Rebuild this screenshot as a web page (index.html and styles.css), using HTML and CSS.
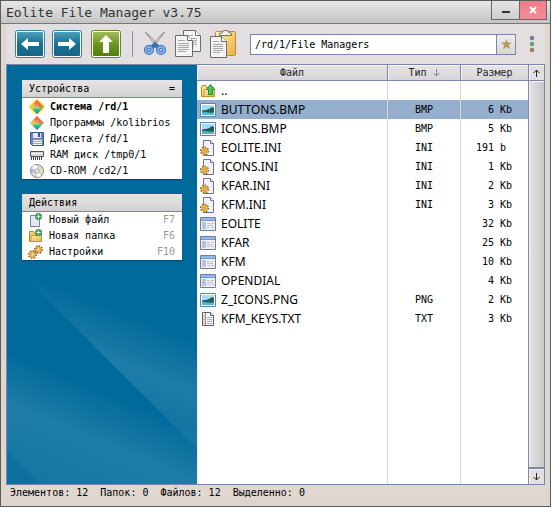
FILE: index.html
```html
<!DOCTYPE html>
<html lang="ru">
<head>
<meta charset="utf-8">
<title>Eolite File Manager v3.75</title>
<link rel="stylesheet" href="styles.css">
</head>
<body>
<svg class="defs" aria-hidden="true">
  <defs>
    <linearGradient id="blue" x1="0" y1="0" x2="0" y2="1"><stop offset="0" stop-color="#4a9fb8"/><stop offset=".5" stop-color="#1c6f92"/><stop offset="1" stop-color="#156588"/></linearGradient>
    <linearGradient id="green" x1="0" y1="0" x2="0" y2="1"><stop offset="0" stop-color="#a0bc58"/><stop offset=".5" stop-color="#6d9622"/><stop offset="1" stop-color="#4f7f08"/></linearGradient>
    <linearGradient id="gold" x1="0" y1="0" x2="1" y2="1"><stop offset="0" stop-color="#fff0b0"/><stop offset="1" stop-color="#e8b040"/></linearGradient>
    <linearGradient id="rainbow" x1="0" y1="0" x2="0" y2="1"><stop offset="0" stop-color="#ee4a30"/><stop offset=".35" stop-color="#f58a58"/><stop offset=".55" stop-color="#9fd480"/><stop offset=".75" stop-color="#27b58c"/><stop offset="1" stop-color="#2c6ee0"/></linearGradient>
    <linearGradient id="ray" gradientUnits="userSpaceOnUse" x1="100" y1="240" x2="62" y2="335"><stop offset="0" stop-color="#fff" stop-opacity="0"/><stop offset=".5" stop-color="#fff" stop-opacity=".12"/><stop offset="1" stop-color="#fff" stop-opacity=".05"/></linearGradient>
    <linearGradient id="ray2" gradientUnits="userSpaceOnUse" x1="0" y1="285" x2="-44" y2="390"><stop offset="0" stop-color="#fff" stop-opacity="0"/><stop offset=".45" stop-color="#fff" stop-opacity=".12"/><stop offset="1" stop-color="#fff" stop-opacity=".08"/></linearGradient>
  </defs>
  <symbol id="i-gem" viewBox="0 0 16 16"><path d="M8 1l7 7-7 7-7-7z" fill="url(#rainbow)"/><path d="M11 4l4 4-3 2-3-3z" fill="#ee5038" opacity=".45"/><path d="M1 8l4-4 2 4-3 3z" fill="#f6d24a" opacity=".55"/></symbol>
  <symbol id="i-floppy" viewBox="0 0 16 16"><path d="M1.500 1.500h13v13h-11l-2-2z" fill="#6a86bd" stroke="#3d5590"/><path d="M4 2h8v5H4z" fill="#e4e9f2"/><path d="M9 2h2v4H9z" fill="#3d5590"/><path d="M4 9h9v5H4z" fill="#fff"/><path d="M4 10.500h9M4 12.500h9" stroke="#ef7d94"/></symbol>
  <symbol id="i-ram" viewBox="0 0 16 16"><path d="M1.500 4.500h13v5h-13z" fill="#d6d6d6" stroke="#555"/><path d="M3 6.500h10" stroke="#fff"/><path d="M2.500 10v3M4.500 10v3M6.500 10v3M8.500 10v3M10.500 10v3M12.500 10v3" stroke="#444"/></symbol>
  <symbol id="i-cd" viewBox="0 0 16 16"><circle cx="8" cy="8" r="6.500" fill="#d7d7dc" stroke="#888"/><path d="M8 8L3 3.500A7 7 0 0 1 8 2z" fill="#fff"/><path d="M8 8l6-2v4z" fill="#f3e28c"/><path d="M8 8l4 5-4 1z" fill="#fff"/><path d="M8 8l-6 2V6z" fill="#bcb4d8"/><circle cx="8" cy="8" r="2" fill="#fff" stroke="#999"/></symbol>
  <symbol id="i-newfile" viewBox="0 0 16 16"><path d="M2.500 3.500h9v11h-9z" fill="#e6e9f4" stroke="#767ea3"/><circle cx="10.500" cy="4.500" r="3.500" fill="#37a04a"/><path d="M8.500 4.500h4M10.500 2.500v4" stroke="#fff"/></symbol>
  <symbol id="i-newfolder" viewBox="0 0 16 16"><path d="M1.500 13.500v-10h4l1 2h7v8z" fill="#f3d070" stroke="#b88618"/><path d="M3.500 7.500h10v6h-11z" fill="url(#gold)" stroke="#c8952a"/><circle cx="10.500" cy="4.500" r="3.500" fill="#37a04a"/><path d="M8.500 4.500h4M10.500 2.500v4" stroke="#fff"/></symbol>
  <symbol id="i-gears" viewBox="0 0 16 16"><g fill="none" stroke="#815515" stroke-width="2" stroke-dasharray="1.500 1.200"><circle cx="4.500" cy="10.500" r="3.500"/><circle cx="10.500" cy="5.500" r="3.500"/></g><g fill="#fff" stroke="#e4ad42" stroke-width="2"><circle cx="4.500" cy="10.500" r="2"/><circle cx="10.500" cy="5.500" r="2"/></g></symbol>
  <symbol id="i-up" viewBox="0 0 16 16"><path d="M1.500 13.500v-10l1-1h3l1 2h7v9z" fill="#f7df88" stroke="#b88618"/><path d="M4.500 6.500h10v7h-11z" fill="url(#gold)" stroke="#c8952a"/><path d="M10.500 1.500l-4 5h2v5h4v-5h2z" fill="#4bc35c" stroke="#219033"/></symbol>
  <symbol id="i-image" viewBox="0 0 16 16"><path d="M.500 1.500h15v13H.500z" fill="#fff" stroke="#6581af"/><path d="M2 3h12v5H2z" fill="#a9dcf2"/><path d="M2 8h12v5H2z" fill="#2b93ae"/><path d="M2 9l4-1 3-1 3-2 2 1v4l-5 1z" fill="#245c5c"/><path d="M2 10l12 1v2H2z" fill="#55b6c8"/></symbol>
  <symbol id="i-ini" viewBox="0 0 16 16"><path d="M3.500.500h7l3 3v12h-10z" fill="#f2f3fa" stroke="#6d7195"/><path d="M10.500.500v3h3" fill="#fff" stroke="#6d7195"/><circle cx="4.500" cy="11" r="3.500" fill="none" stroke="#815515" stroke-width="2" stroke-dasharray="1.500 1.200"/><circle cx="4.500" cy="11" r="2.200" fill="#fff" stroke="#e9ad3c" stroke-width="2.400"/><circle cx="4.500" cy="11" r="1" fill="#fff" stroke="#815515" stroke-width=".5"/></symbol>
  <symbol id="i-app" viewBox="0 0 16 16"><path d="M.500 1.500h15v13H.500z" fill="#f0f1f5" stroke="#707ba4"/><path d="M1 2h14v3H1z" fill="#8ebcf0"/><path d="M1 4.500h14" stroke="#707ba4" opacity=".6"/><path d="M2 6h4v7H2z" fill="#b9c2d8"/><path d="M7 7.500h3M11 7.500h3M7 9.500h6M7 11.500h3M11 11.500h3" stroke="#bfc3d0"/></symbol>
  <symbol id="i-text" viewBox="0 0 16 16"><path d="M2.500 1.500h8l3 3v10h-11z" fill="#f6f6fa" stroke="#5d6080"/><path d="M10.500 1.500v3h3" fill="#fff" stroke="#5d6080"/><path d="M3 4.500h2M3 6.500h2M3 8.500h2M3 10.500h2M3 12.500h2" stroke="#f5a58a"/><path d="M5.500 2v12" stroke="#f2703e"/><path d="M7 6.500h5M7 8.500h5M7 10.500h5M7 12.500h5" stroke="#b0b2c0"/></symbol>
  <symbol id="i-page" viewBox="0 0 18 22"><path d="M.500.500h12l5 5v16H.500z" fill="#f4f4f4" stroke="#6c6c6c"/><path d="M12.500.500v5h5" fill="#fff" stroke="#6c6c6c"/><path d="M3 5.500h7M3 8.500h11M3 10.500h11M3 12.500h11M3 14.500h11M3 16.500h8" stroke="#a8a8a8"/></symbol>
</svg>

<div class="window">
  <header class="titlebar">
    <h1>Eolite File Manager v3.75</h1>
    <div class="controls">
      <button class="min" aria-label="Minimize"><svg width="8" height="8"><path d="M0 6h8" stroke="#333" stroke-width="2"/></svg></button>
      <button class="close" aria-label="Close"><svg width="8" height="8"><path d="M1 1l6 6M7 1L1 7" stroke="#fff" stroke-width="2"/></svg></button>
    </div>
  </header>

  <nav class="toolbar">
    <button aria-label="Back"><svg width="30" height="28"><rect x=".5" y=".5" width="29" height="27" rx="2" fill="#fff" stroke="#3b7f9b"/><rect x="2" y="2" width="26" height="24" rx="1" fill="url(#blue)"/><path d="M6 14l7-6v4h11v4H13v4z" fill="#fff"/></svg></button>
    <button aria-label="Forward"><svg width="30" height="28"><rect x=".5" y=".5" width="29" height="27" rx="2" fill="#fff" stroke="#3b7f9b"/><rect x="2" y="2" width="26" height="24" rx="1" fill="url(#blue)"/><path d="M24 14l-7-6v4H6v4h11v4z" fill="#fff"/></svg></button>
    <button class="up" aria-label="Up"><svg width="30" height="28"><rect x=".5" y=".5" width="29" height="27" rx="2" fill="#fff" stroke="#64852e"/><rect x="2" y="2" width="26" height="24" rx="1" fill="url(#green)"/><path d="M15 5l7 7h-4v11h-6V12H8z" fill="#fff"/></svg></button>
    <span class="sep"></span>
    <button aria-label="Cut"><svg width="22" height="26"><path d="M1.500 1.500l2 1 11 12-2 1zM20.500 1.500l-2 1-11 12 2 1z" fill="#f4f4f4" stroke="#858585"/><g fill="none" stroke="#3a70b8" stroke-width="4"><ellipse cx="5" cy="19" rx="3" ry="3"/><ellipse cx="17" cy="19" rx="3" ry="3"/><path d="M8 16l3-2 3 2"/></g><g fill="none" stroke="#7fb0e6" stroke-width="2"><ellipse cx="5" cy="19" rx="3" ry="3"/><ellipse cx="17" cy="19" rx="3" ry="3"/></g></svg></button>
    <button class="copy" aria-label="Copy"><svg width="26" height="28"><use href="#i-page" x="8" y="0" width="18" height="22"/><use href="#i-page" x="0" y="5" width="18" height="22"/></svg></button>
    <button aria-label="Paste"><svg width="26" height="28"><rect x="5.500" y="1.500" width="20" height="24" rx="1" fill="url(#gold)" stroke="#c08c28"/><path d="M9.500 5.500v-2l3-1 1-2h4l1 2 3 1v2z" fill="#eee" stroke="#777"/><svg x="0" y="6" width="17" height="22" viewBox="0 0 17 22"><path d="M.500.500h11l5 5v16H.500z" fill="#f4f4f4" stroke="#6c6c6c"/><path d="M11.500.500v5h5" fill="#fff" stroke="#6c6c6c"/><path d="M3 5.500h6M3 8.500h10M3 10.500h10M3 12.500h10M3 14.500h10M3 16.500h7" stroke="#a8a8a8"/></svg></svg></button>
    <div class="address">
      <input type="text" value="/rd/1/File Managers" aria-label="Path">
      <button aria-label="Bookmarks"><svg width="11" height="10"><path d="M5.500 0l1.500 3.500h4L8 6l1 4-3.500-2L2 10l1-4L0 3.500h4z" fill="#b59b62"/></svg></button>
    </div>
    <button aria-label="Menu"><svg width="6" height="18"><circle cx="3" cy="3" r="2.200" fill="#7776a4"/><circle cx="3" cy="9" r="2.200" fill="#58a65c"/><circle cx="3" cy="15" r="2.200" fill="#9b7c6d"/></svg></button>
  </nav>

  <main class="content">
    <aside class="sidebar">
      <svg class="rays" viewBox="0 0 190 420" preserveAspectRatio="xMinYMax slice" aria-hidden="true"><path d="M10 205l180 70v110z" fill="url(#ray)"/><path d="M0 285l190 80v55H0z" fill="url(#ray2)"/><path d="M0 387l33 33H0z" fill="#006a9c" opacity=".4"/></svg>
      <section class="panel">
        <h2>Устройства <span>=</span></h2>
        <ul>
          <li class="active"><a href="#"><svg class="glow"><use href="#i-gem"/></svg>Система /rd/1</a></li>
          <li><a href="#"><svg><use href="#i-gem"/></svg>Программы /kolibrios</a></li>
          <li><a href="#"><svg><use href="#i-floppy"/></svg>Дискета /fd/1</a></li>
          <li><a href="#"><svg><use href="#i-ram"/></svg>RAM диск /tmp0/1</a></li>
          <li><a href="#"><svg><use href="#i-cd"/></svg>CD-ROM /cd2/1</a></li>
        </ul>
      </section>
      <section class="panel actions">
        <h2>Действия</h2>
        <ul>
          <li><a href="#"><svg><use href="#i-newfile"/></svg>Новый файл<kbd>F7</kbd></a></li>
          <li><a href="#"><svg><use href="#i-newfolder"/></svg>Новая папка<kbd>F6</kbd></a></li>
          <li><a href="#"><svg><use href="#i-gears"/></svg>Настройки<kbd>F10</kbd></a></li>
        </ul>
      </section>
    </aside>

    <div class="list">
      <table>
        <colgroup><col><col class="c-type"><col class="c-size"></colgroup>
        <thead><tr><th>Файл</th><th>Тип <svg width="7" height="8"><path d="M3.500 0v7M.500 4l3 3 3-3" fill="none" stroke="#7385ad"/></svg></th><th>Размер</th></tr></thead>
        <tbody>
          <tr><td><div><svg><use href="#i-up"/></svg>..</div></td><td></td><td></td></tr>
          <tr class="selected"><td><div><svg><use href="#i-image"/></svg>BUTTONS.BMP</div></td><td>BMP</td><td>6 Kb</td></tr>
          <tr><td><div><svg><use href="#i-image"/></svg>ICONS.BMP</div></td><td>BMP</td><td>5 Kb</td></tr>
          <tr><td><div><svg><use href="#i-ini"/></svg>EOLITE.INI</div></td><td>INI</td><td>191 b </td></tr>
          <tr><td><div><svg><use href="#i-ini"/></svg>ICONS.INI</div></td><td>INI</td><td>1 Kb</td></tr>
          <tr><td><div><svg><use href="#i-ini"/></svg>KFAR.INI</div></td><td>INI</td><td>2 Kb</td></tr>
          <tr><td><div><svg><use href="#i-ini"/></svg>KFM.INI</div></td><td>INI</td><td>3 Kb</td></tr>
          <tr><td><div><svg><use href="#i-app"/></svg>EOLITE</div></td><td></td><td>32 Kb</td></tr>
          <tr><td><div><svg><use href="#i-app"/></svg>KFAR</div></td><td></td><td>25 Kb</td></tr>
          <tr><td><div><svg><use href="#i-app"/></svg>KFM</div></td><td></td><td>10 Kb</td></tr>
          <tr><td><div><svg><use href="#i-app"/></svg>OPENDIAL</div></td><td></td><td>4 Kb</td></tr>
          <tr><td><div><svg><use href="#i-image"/></svg>Z_ICONS.PNG</div></td><td>PNG</td><td>2 Kb</td></tr>
          <tr><td><div><svg><use href="#i-text"/></svg>KFM_KEYS.TXT</div></td><td>TXT</td><td>3 Kb</td></tr>
        </tbody>
      </table>
    </div>

    <div class="scroll">
      <button aria-label="Scroll up"><svg width="7" height="8"><path d="M3.500 8V1M.500 4l3-3 3 3" fill="none" stroke="#222"/></svg></button>
      <div class="thumb"></div>
      <button aria-label="Scroll down"><svg width="7" height="8"><path d="M3.500 0v7M.500 4l3 3 3-3" fill="none" stroke="#222"/></svg></button>
    </div>
  </main>

  <footer class="status"><span>Элементов: 12</span><span>Папок: 0</span><span>Файлов: 12</span><span>Выделенно: 0</span></footer>
</div>
</body>
</html>
```

FILE: styles.css
```css
* { box-sizing: border-box; }

body {
  margin: 0;
  font: 10px/16px "DejaVu Sans Mono", monospace;
  color: #000;
}

.defs { position: absolute; width: 0; height: 0; }

svg { display: block; flex: none; }

button {
  display: flex;
  align-items: center;
  justify-content: center;
  padding: 0;
  border: 0;
  background: none;
}

.window {
  display: flex;
  flex-direction: column;
  height: 100vh;
  border: 1px solid #5b5b5b;
  background: #ddd7cf;
}

/* Title bar */
.titlebar {
  display: flex;
  justify-content: space-between;
  align-items: flex-start;
  height: 23px;
  padding: 0 3px 0 5px;
  border-bottom: 1px solid #777;
  background: linear-gradient(#e6e6e6, #c4c4c4);
}

h1 {
  margin: 0;
  font-size: 13px;
  line-height: 23px;
  font-weight: normal;
  color: #333;
}

.controls { display: flex; border: 1px solid #666; border-top: 0; }
.controls button { width: 27px; height: 18px; background: linear-gradient(#e4e4e4, #cfcfcf); }
.controls .close { border-left: 1px solid #666; background: linear-gradient(#f27c89, #ef8d98); }

/* Toolbar */
.toolbar {
  display: flex;
  align-items: center;
  gap: 7px;
  height: 40px;
  margin: 0 5px;
  padding: 0 10px 0 9px;
  background: #e3dee0;
}

.up { margin-left: 2px; }
.copy { margin: 0 2px; }
.sep { width: 1px; height: 26px; margin: 0 4px; background: #8490b4; }

.address {
  display: flex;
  flex: 1;
  min-width: 0;
  height: 21px;
  margin: 0 6px 0 7px;
  border: 1px solid #7b86ab;
  background: #fff;
}

.address input {
  flex: 1;
  min-width: 0;
  padding: 1px 4px 0;
  border: 0;
  background: none;
  font: inherit;
  color: #000;
}

.address button {
  width: 19px;
  border-left: 1px solid #7b86ab;
  background: linear-gradient(#eee, #dad6d8);
}

/* Content */
.content {
  display: flex;
  flex: 1;
  min-height: 0;
  margin: 0 5px;
  border: 1px solid #7b86ab;
}

.sidebar {
  position: relative;
  width: 190px;
  padding: 15px;
  background: #006a9c;
  overflow: hidden;
}

.rays { position: absolute; inset: 0; width: 100%; height: 100%; }

.panel {
  position: relative;
  margin-bottom: 15px;
  background: #fff;
  box-shadow: 0 1px 1px #004a70;
}

h2 {
  display: flex;
  justify-content: space-between;
  height: 18px;
  margin: 0;
  padding: 0 7px;
  border-bottom: 1px solid #7b86ab;
  background: linear-gradient(#e8e4e5, #d2d1d2);
  font-size: 10px;
  line-height: 18px;
  font-weight: normal;
}

ul { margin: 0; padding: 1px 7px 0; list-style: none; }
.actions ul { padding: 0 7px 0 6px; }
li a { display: flex; align-items: center; gap: 5px; color: #000; text-decoration: none; }
li svg { width: 16px; height: 16px; }
.glow { filter: drop-shadow(0 0 1px #f5dc00) drop-shadow(0 0 1px #f5dc00); }
.active { font-weight: bold; }
kbd { margin-left: auto; font: inherit; color: #999; }

/* File list */
.list {
  flex: 1;
  min-width: 0;
  background:
    linear-gradient(#ddd7cf, #ddd7cf) right 140px top / 1px 100% no-repeat,
    linear-gradient(#ddd7cf, #ddd7cf) right 67px top / 1px 100% no-repeat,
    #fff;
}

table { width: 100%; table-layout: fixed; border-spacing: 0; }
.c-type { width: 73px; }
.c-size { width: 68px; }

th {
  height: 16px;
  padding: 0;
  border-bottom: 1px solid #7b86ab;
  background: linear-gradient(#e8e4e5, #d8d5d7);
  box-shadow: inset 1px 1px #f6f4f5;
  font-weight: normal;
  line-height: 15px;
  color: #222;
}

th + th { border-left: 1px solid #7b86ab; }
th svg { display: inline-block; vertical-align: -1px; }

td { height: 19px; padding: 0; line-height: 19px; text-align: center; }
td + td { border-left: 1px solid #ddd7cf; }
td:last-child { padding-right: 16px; text-align: right; white-space: pre; }
td div {
  display: flex;
  align-items: center;
  gap: 5px;
  height: 19px;
  padding-left: 3px;
  font-family: "Noto Sans", sans-serif;
  font-size: 12px;
}
td svg { width: 16px; height: 16px; }
.selected { background: #94aece; }

/* Scroll bar */
.scroll {
  display: flex;
  flex-direction: column;
  width: 16px;
  border-left: 1px solid #7b86ab;
}

.scroll button { height: 15px; background: #e3dee0; box-shadow: inset 1px 1px #f8f6f7; }
.thumb {
  flex: 1;
  border: 1px solid #7b86ab;
  border-width: 1px 0 2px;
  background: linear-gradient(90deg, #e6e2e4, #c9c8c9);
  box-shadow: inset 1px 1px #f8f6f7;
}

/* Status bar */
.status {
  display: flex;
  gap: 12px;
  height: 16px;
  margin: 0 5px 5px;
  padding: 0 4px;
  border-bottom: 1px solid #d4d0cc;
  background: #dfd7d0;
}
```
